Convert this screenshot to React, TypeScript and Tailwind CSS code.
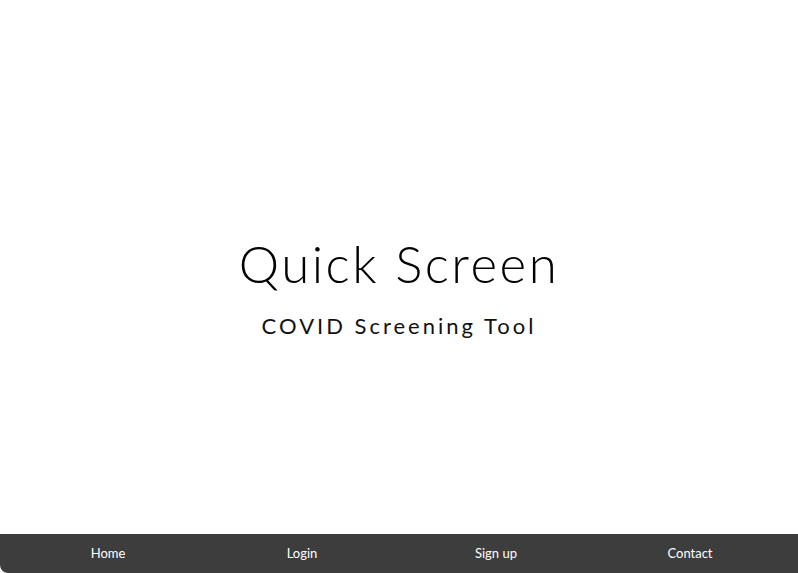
export default function App() {
  const links = ['Home', 'Login', 'Sign up', 'Contact']

  return (
    <div className="flex h-[573px] w-full flex-col bg-white font-['Lato','Open_Sans',sans-serif]">
      <main className="flex flex-1 flex-col items-center justify-center pt-[40px]">
        <h1 className="text-[51px] font-light leading-none tracking-[2.5px] text-black">
          Quick Screen
        </h1>
        <p className="mt-[26px] text-[22px] font-normal leading-none tracking-[3px] text-[#111]">
          COVID Screening Tool
        </p>
      </main>
      <nav className="grid h-[39px] grid-cols-4 items-center rounded-bl-[8px] bg-[#3d3d3d] px-[11px]">
        {links.map((l) => (
          <a key={l} className="text-center text-[13px] text-white">
            {l}
          </a>
        ))}
      </nav>
    </div>
  )
}
